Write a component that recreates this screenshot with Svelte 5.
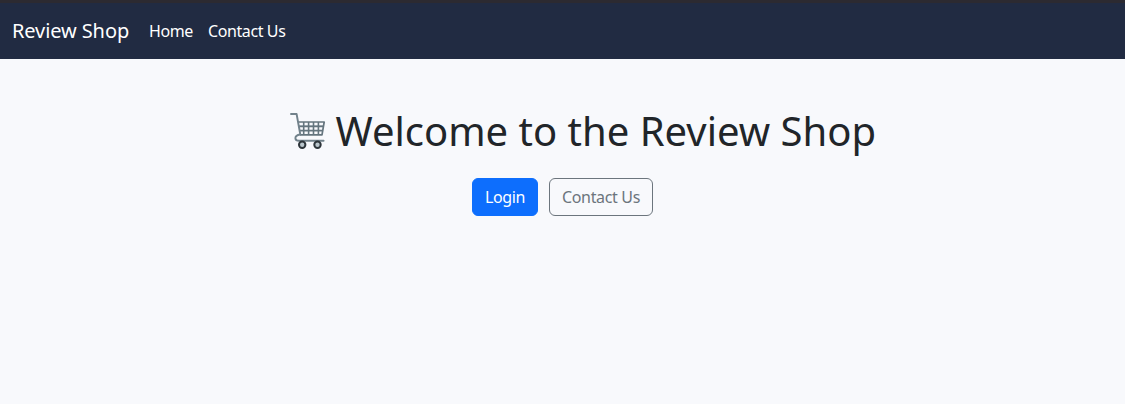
<script>
  const links = ['Home', 'Contact Us'];
</script>

<div class="page">
  <nav>
    <a class="brand" href="#home">Review Shop</a>
    {#each links as link, i}
      <a class="link" class:contact={i === 1} href="#nav">{link}</a>
    {/each}
  </nav>
  <main>
    <h1>
      <svg class="cart" viewBox="0 0 36 38" width="36" height="38" fill="none" aria-hidden="true">
        <path d="M9 14.2H34M9.5 18.8H33" stroke="#9ba9b0" stroke-width="1.2" />
        <path d="M13.7 10V23M18.6 10V23M23.5 10V23M28.4 10V23" stroke="#65757e" stroke-width="1.6" />
        <path d="M8 10H34.2L32 22.8H10M8.7 14.3H33.5M9.3 18.5H32.7" stroke="#65757e" stroke-width="1.7" stroke-linejoin="round" />
        <path d="M1 2H6.6L10.3 22.5C6.5 22.8 5.2 25 5.4 26.4C5.6 28.4 7 28.8 9 28.8H33.6" stroke="#72828b" stroke-width="1.9" stroke-linecap="round" stroke-linejoin="round" />
        <circle cx="12.2" cy="32.7" r="3.2" fill="#b9c5cb" stroke="#2d353a" stroke-width="2" />
        <circle cx="27.5" cy="32.7" r="3.2" fill="#b9c5cb" stroke="#2d353a" stroke-width="2" />
      </svg>
      <span>Welcome to the Review Shop</span>
    </h1>
    <div class="actions">
      <a class="button primary" href="#login"><span>Login</span></a>
      <a class="button outline" href="#contact"><span>Contact Us</span></a>
    </div>
  </main>
</div>

<style>
  :global(body) { margin: 0; background: #f8f9fc; }
  .page {
    box-sizing: border-box;
    min-height: 404px;
    border-top: 3px solid #2c2a31;
    background: #f8f9fc;
    color: #212529;
    font: 16px/24px "Noto Sans", sans-serif;
  }
  a { text-decoration: none; white-space: nowrap; }
  nav {
    display: flex;
    align-items: center;
    box-sizing: border-box;
    height: 56px;
    padding: 0 12px;
    background: #212b42;
  }
  nav a { color: #fff; }
  .brand { width: 113px; margin-right: 24px; font-size: 20px; line-height: 30px; letter-spacing: -0.1px; }
  .link { width: 43px; margin-right: 16px; letter-spacing: -0.4px; }
  .contact { width: 78px; }
  main { display: flex; flex-direction: column; align-items: center; padding-top: 48px; }
  h1 {
    display: flex;
    box-sizing: border-box;
    width: 548px;
    height: 48px;
    margin: 0 0 23px;
    font-size: 40px;
    font-weight: 400;
    line-height: 48px;
    white-space: nowrap;
  }
  .cart { flex: none; margin: 5px 10px 0 1px; }
  .actions { display: flex; gap: 11px; }
  .button {
    display: flex;
    align-items: center;
    justify-content: center;
    box-sizing: border-box;
    height: 38px;
    border: 1px solid #6c757d;
    border-radius: 6px;
    letter-spacing: -0.35px;
  }
  .primary { width: 66px; border-color: #0d6efd; background: #0d6efd; color: #fff; }
  .outline { width: 104px; color: #6c757d; }
</style>
